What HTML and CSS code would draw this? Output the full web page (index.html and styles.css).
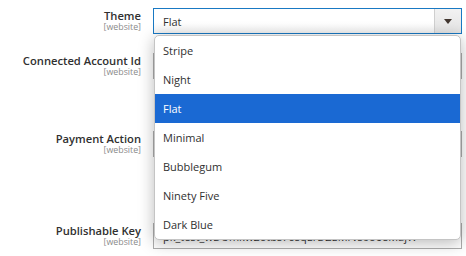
FILE: index.html
```html
<!DOCTYPE html>
<html>
<head>
<meta charset="utf-8">
<link rel="stylesheet" href="styles.css">
</head>
<body>
<div class="form">
  <div class="row row-theme">
    <div class="label"><span class="title">Theme</span><span class="scope">[website]</span></div>
    <div class="control">
      <div class="select focused">
        <span class="value">Flat</span>
        <span class="arrow-btn"><span class="arrow"></span></span>
      </div>
      <ul class="dropdown">
        <li class="option">Stripe</li>
        <li class="option">Night</li>
        <li class="option selected">Flat</li>
        <li class="option">Minimal</li>
        <li class="option">Bubblegum</li>
        <li class="option">Ninety Five</li>
        <li class="option">Dark Blue</li>
      </ul>
    </div>
  </div>
  <div class="row row-account">
    <div class="label"><span class="title">Connected Account Id</span><span class="scope">[website]</span></div>
    <div class="control"><div class="input"></div></div>
  </div>
  <div class="row row-action">
    <div class="label"><span class="title">Payment Action</span><span class="scope">[website]</span></div>
    <div class="control"><div class="input">Authorize Only</div></div>
  </div>
  <div class="row row-key">
    <div class="label"><span class="title">Publishable Key</span><span class="scope">[website]</span></div>
    <div class="control"><div class="input">pk_test_wDUmkw2otbs7ceqErDZEMrvs0o6eMajW</div></div>
  </div>
</div>
</body>
</html>
```

FILE: styles.css
```css
html, body {
  margin: 0;
  padding: 0;
  background: #ffffff;
}

body {
  font-family: "Open Sans", "Noto Sans", sans-serif;
  color: #303030;
  width: 466px;
  height: 256px;
  overflow: hidden;
}

.form {
  padding-top: 8px;
}

.row {
  display: grid;
  grid-template-columns: 141px 309px;
  column-gap: 12px;
  align-items: start;
}

.row-account { margin-top: 19px; }
.row-action { margin-top: 52px; }
.row-key { margin-top: 66px; }

.label {
  display: flex;
  flex-direction: column;
  align-items: flex-end;
  text-align: right;
  padding-top: 1px;
}

.title {
  font-size: 11.2px;
  font-weight: 600;
  line-height: 14px;
  color: #303030;
  white-space: nowrap;
}

.scope {
  font-size: 8.8px;
  line-height: 10px;
  margin-top: -1px;
  color: #8a8a8a;
}

.control {
  position: relative;
}

.select,
.input {
  box-sizing: border-box;
  height: 26px;
  border: 1px solid #adadad;
  background: #ffffff;
  font-size: 11px;
  line-height: 24px;
  padding-top: 1px;
  padding-left: 9px;
  color: #303030;
  white-space: nowrap;
  overflow: hidden;
}

.select {
  display: flex;
  justify-content: space-between;
  padding: 0;
}

.select .value {
  padding-left: 9px;
  padding-top: 1px;
}

.select.focused {
  border-color: #1979c3;
  background: linear-gradient(#ffffff 55%, #f2f2f2);
}

.arrow-btn {
  width: 26px;
  border-left: 1px solid #cfcfcf;
  background: linear-gradient(#f2f2f2, #e3e3e3);
  display: flex;
  align-items: center;
  justify-content: center;
}

.arrow {
  width: 0;
  height: 0;
  border-left: 4px solid transparent;
  border-right: 4px solid transparent;
  border-top: 5px solid #41362f;
  margin-top: 1px;
}

.dropdown {
  position: absolute;
  top: 27px;
  left: 1px;
  width: 307px;
  box-sizing: border-box;
  margin: 0;
  padding: 0;
  list-style: none;
  background: #ffffff;
  border: 1px solid #c4c4c4;
  border-radius: 5px;
  box-shadow: 0 3px 16px rgba(0, 0, 0, 0.28);
  overflow: hidden;
  z-index: 10;
}

.option {
  height: 29px;
  line-height: 29px;
  padding-left: 8px;
  font-size: 11px;
  color: #303030;
}

.option.selected {
  background: #1a69d3;
  color: #ffffff;
}
```
